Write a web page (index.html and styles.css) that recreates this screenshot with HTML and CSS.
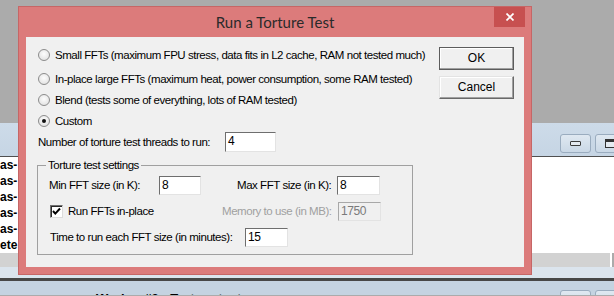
FILE: index.html
```html
<!DOCTYPE html>
<html>

<head>
    <title>Run a Torture Test</title>
    <link rel="stylesheet" href="styles.css">
</head>

<body>
    <div class="desk">
        <div class="desk-top"></div>
        <div class="child">
            <div class="child-bar">
                <span class="cap-btn"><span class="ico-min"></span></span>
                <span class="cap-btn last"><span class="ico-max"></span></span>
            </div>
            <div class="child-body">
                <div class="log">
                    <div>as-</div>
                    <div>as-</div>
                    <div>as-</div>
                    <div>as-</div>
                    <div>as-</div>
                    <div>ete</div>
                </div>
            </div>
            <div class="child-scroll"></div>
            <div class="child-foot"></div>
        </div>
        <div class="child-bar second">
            <span class="child-title">Worker #2 - Torture test</span>
            <span class="cap-btn"><span class="ico-min"></span></span>
            <span class="cap-btn last"><span class="ico-max"></span></span>
        </div>
    </div>

    <div class="dialog">
        <div class="dlg-title">Run a Torture Test</div>
        <span class="dlg-close">
            <svg width="8" height="8" viewBox="0 0 8 8">
                <path d="M0.5 0.5 L7.5 7.5 M7.5 0.5 L0.5 7.5" stroke="#fff" stroke-width="1.7" fill="none"/>
            </svg>
        </span>
        <div class="dlg-client">
            <div class="opts">
                <div class="opt first"><span class="radio"></span>Small FFTs (maximum FPU stress, data fits in L2 cache, RAM not tested much)</div>
                <div class="opt second"><span class="radio"></span>In-place large FFTs (maximum heat, power consumption, some RAM tested)</div>
                <div class="opt"><span class="radio"></span>Blend (tests some of everything, lots of RAM tested)</div>
                <div class="opt"><span class="radio on"></span>Custom</div>

                <div class="row threads">
                    <span class="lbl w187">Number of torture test threads to run:</span>
                    <span class="edit w51">4</span>
                </div>

                <fieldset class="group">
                    <legend>Torture test settings</legend>
                    <div class="row">
                        <span class="lbl w110">Min FFT size (in K):</span>
                        <span class="edit w42">8</span>
                        <span class="lbl w100 gap36">Max FFT size (in K):</span>
                        <span class="edit w43">8</span>
                    </div>
                    <div class="row mid">
                        <span class="lbl w172"><span class="check">
                            <svg width="11" height="11" viewBox="0 0 11 11">
                                <path d="M2 5 L4.3 7.6 L9 2.5" stroke="#000" stroke-width="2" fill="none"/>
                            </svg>
                        </span>Run FFTs in-place</span>
                        <span class="lbl w116 off">Memory to use (in MB):</span>
                        <span class="edit w43 dis">1750</span>
                    </div>
                    <div class="row mid">
                        <span class="lbl w195">Time to run each FFT size (in minutes):</span>
                        <span class="edit w43">15</span>
                    </div>
                </fieldset>
            </div>
            <div class="btns">
                <div class="btn default">OK</div>
                <div class="btn">Cancel</div>
            </div>
        </div>
    </div>
</body>
</html>
```

FILE: styles.css
```css
body {
    margin: 0;
    width: 614px;
    height: 296px;
    overflow: hidden;
    position: relative;
    background: #ababab;
    font-family: "Liberation Sans", Arial, sans-serif;
    font-size: 11.5px;
    letter-spacing: -0.45px;
    color: #000;
}

/* background windows */
.desk-top {
    height: 123px;
}

.child-bar {
    height: 35px;
    box-sizing: border-box;
    background: linear-gradient(#cddbe9, #c6d5e4);
    border-bottom: 2px solid #505050;
    display: flex;
    justify-content: flex-end;
    align-items: flex-start;
    gap: 4px;
    padding-top: 11px;
}

.child-bar.second {
    height: 14px;
    overflow: hidden;
    border: none;
    padding-top: 9px;
    background: #c4d3e1;
}

.child-title {
    margin-right: auto;
    margin-left: 96px;
    margin-top: 1px;
    font-size: 13px;
    font-weight: bold;
    line-height: 16px;
    letter-spacing: 0;
}

.cap-btn {
    flex: none;
    width: 31px;
    height: 19px;
    box-sizing: border-box;
    border: 1px solid #9aacbf;
    border-radius: 3px;
    background: linear-gradient(#dfe8f1, #cad8e6);
    display: flex;
    align-items: center;
    justify-content: center;
}

.cap-btn.last {
    margin-right: -12px;
}

.ico-min {
    width: 11px;
    height: 5px;
    box-sizing: border-box;
    border: 1px solid #3c3c3c;
    border-radius: 1px;
    background: #e4eaf0;
}

.ico-max {
    width: 12px;
    height: 9px;
    box-sizing: border-box;
    border: 1px solid #333;
    border-top-width: 3px;
    background: #e4eaf0;
}

.child-body {
    height: 96px;
    background: #fff;
}

.log {
    margin-top: -1px;
    font-size: 12px;
    font-weight: bold;
    line-height: 16px;
    letter-spacing: 0;
}

.child-scroll {
    height: 14px;
    margin-right: 2px;
    background: #d2d2d2;
    border-right: 2px solid #fff;
}

.child-foot {
    height: 11px;
    background: #dbe4ed;
    border-bottom: 3px solid #474747;
}

/* dialog */
.dialog {
    position: absolute;
    left: 18px;
    top: 6px;
    width: 514px;
    height: 269px;
    box-sizing: border-box;
    background: #dc7b7b;
    border: 1px solid #c66666;
    padding: 0 7px 7px;
    display: flex;
    flex-direction: column;
}

.dlg-title {
    height: 30px;
    line-height: 30px;
    text-align: center;
    font-family: Lato, "Liberation Sans", sans-serif;
    font-size: 15px;
    letter-spacing: 0;
    color: #2a2a2a;
}

.dlg-close {
    position: absolute;
    top: 0;
    right: 6px;
    width: 31px;
    height: 20px;
    background: #c75050;
    display: flex;
    align-items: center;
    justify-content: center;
}

.dlg-client {
    flex: 1;
    background: #f0f0f0;
    display: flex;
}

.opts {
    flex: 1;
    min-width: 0;
    padding-left: 12px;
}

.opt {
    height: 21px;
    display: flex;
    align-items: center;
    white-space: nowrap;
}

.opt.first {
    margin-top: 7px;
}

.opt.second {
    margin-top: 3px;
}

.radio {
    flex: none;
    width: 12px;
    height: 12px;
    box-sizing: border-box;
    border: 1px solid #8c8c8c;
    border-radius: 50%;
    background: radial-gradient(circle at 50% 40%, #fdfdfd, #dcdcdc);
    margin-right: 5px;
    display: flex;
    align-items: center;
    justify-content: center;
}

.radio.on::after {
    content: "";
    width: 4px;
    height: 4px;
    border-radius: 50%;
    background: #111;
}

.row {
    height: 20px;
    display: flex;
    align-items: center;
    white-space: nowrap;
}

.row.threads {
    margin-top: 1px;
}

.row.mid {
    margin-top: 6px;
    margin-left: 1px;
}

.lbl {
    flex: none;
    display: flex;
    align-items: center;
}

.lbl.off {
    color: #a0a0a0;
}

.w187 { width: 187px; }
.w110 { width: 110px; }
.w100 { width: 100px; }
.w172 { width: 172px; }
.w116 { width: 116px; }
.w195 { width: 195px; }
.gap36 { margin-left: 36px; }

.edit {
    flex: none;
    height: 19px;
    box-sizing: border-box;
    border: 1px solid;
    border-color: #6e6e6e #e3e3e3 #e3e3e3 #6e6e6e;
    background: #fff;
    padding-left: 2px;
    line-height: 17px;
    font-size: 12px;
}

.edit.w51 { width: 51px; height: 20px; }
.edit.w42 { width: 42px; }
.edit.w43 { width: 43px; }

.edit.dis {
    background: #f0f0f0;
    color: #7a7a7a;
    border-color: #a8a8a8 #e3e3e3 #e3e3e3 #a8a8a8;
}

.check {
    flex: none;
    width: 13px;
    height: 13px;
    box-sizing: border-box;
    border: 1px solid;
    border-color: #707070 #dcdcdc #dcdcdc #707070;
    box-shadow: inset 1px 1px #2a2a2a;
    background: #fff;
    margin-right: 5px;
    display: flex;
    align-items: center;
    justify-content: center;
}

.group {
    width: 376px;
    box-sizing: border-box;
    margin: 6px 0 0 -1px;
    padding: 3px 0 7px 11px;
    border: 1px solid #a0a0a0;
}

.group legend {
    padding: 0 2px;
    margin-left: -3px;
    line-height: 14px;
}

.btns {
    flex: none;
    width: 75px;
    margin-right: 10px;
    padding-top: 10px;
    display: flex;
    flex-direction: column;
    gap: 6px;
}

.btn {
    height: 23px;
    box-sizing: border-box;
    border: 1px solid;
    border-color: #e3e3e3 #696969 #696969 #e3e3e3;
    box-shadow: inset -1px -1px #a0a0a0, inset 1px 1px #fff;
    background: #f0f0f0;
    text-align: center;
    line-height: 20px;
    font-size: 12px;
    letter-spacing: 0;
}

.btn.default {
    border-color: #5c5c5c;
}
```
